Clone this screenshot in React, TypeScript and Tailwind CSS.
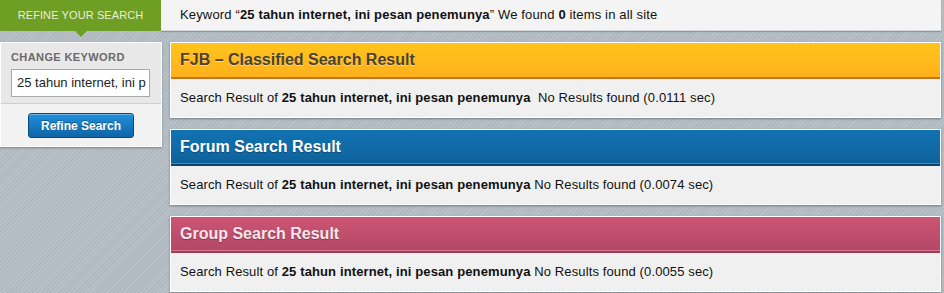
import React from "react";

const font = { fontFamily: '"Liberation Sans", Arial, sans-serif' };

function Panel({
  title,
  headerClass,
  titleClass,
  time,
  extraSpace,
}: {
  title: string;
  headerClass: string;
  titleClass: string;
  time: string;
  extraSpace?: boolean;
}) {
  return (
    <div className="border border-white shadow-[0_1px_2px_rgba(0,0,0,0.35)] bg-[#f0f0f0]">
      <div className={`h-[36px] flex items-center px-[9px] ${headerClass}`}>
        <span className={`text-[16px] font-bold ${titleClass}`}>{title}</span>
      </div>
      <div className="h-[38px] flex items-center px-[9px] text-[13px] tracking-[0.12px] text-[#111]">
        <span>
          Search Result of <b>25 tahun internet, ini pesan penemunya</b>
          {extraSpace ? "\u00a0 " : " "}No Results found ({time} sec)
        </span>
      </div>
    </div>
  );
}

export default function App() {
  return (
    <div
      style={font}
      className="w-[944px] h-[293px] overflow-hidden bg-[#b3bdc3] bg-[repeating-linear-gradient(135deg,#b9c3c9_0px,#b9c3c9_1px,#afb9bf_1px,#afb9bf_3px)]"
    >
      <div className="flex h-[31px]">
        <div className="relative w-[161px] bg-[#6f9e24] flex items-center justify-center">
          <span className="text-[11px] tracking-[0.1px] text-[#e6f0d6]">REFINE YOUR SEARCH</span>
          <div className="absolute left-[75px] top-[31px] w-0 h-0 border-l-[6px] border-r-[6px] border-t-[6px] border-l-transparent border-r-transparent border-t-[#6f9e24]" />
        </div>
        <div className="w-[780px] bg-[#f4f4f4] border-b border-[#d6dadc] shadow-[0_1px_1px_rgba(0,0,0,0.2)] flex items-center pl-[19px] text-[13px] tracking-[0.15px] text-[#111]">
          <span>
            Keyword “<b>25 tahun internet, ini pesan penemunya</b>” We found <b>0</b> items in all site
          </span>
        </div>
      </div>
      <div className="flex pt-[11px]">
        <div className="w-[162px] h-[105px] border border-white shadow-[0_1px_2px_rgba(0,0,0,0.3)] flex flex-col">
          <div className="h-[61px] bg-[#e8e8e8] border-b border-[#cfcfcf] px-[10px] pt-[8px]">
            <div className="text-[11px] font-bold tracking-[0.4px] text-[#6a6a6a] leading-[13px]">CHANGE KEYWORD</div>
            <div className="mt-[5px] h-[28px] w-[139px] border border-[#a9a9a9] bg-white flex items-center px-[5px] overflow-hidden whitespace-nowrap text-[13px] text-[#222]">
              25 tahun internet, ini p
            </div>
          </div>
          <div className="flex-1 bg-[#f2f2f2] flex justify-center pt-[9px]">
            <div className="w-[106px] h-[25px] rounded-[3px] border border-[#0b4a7c] bg-[linear-gradient(#2190dc,#0f64a6)] shadow-[inset_0_1px_0_rgba(255,255,255,0.35)] flex items-center justify-center text-[12px] font-bold text-white [text-shadow:0_-1px_0_rgba(0,0,0,0.3)]">
              Refine Search
            </div>
          </div>
        </div>
        <div className="ml-[8px] w-[771px] flex flex-col gap-[11px]">
          <Panel
            title="FJB – Classified Search Result"
            headerClass="bg-[linear-gradient(#ffc51c,#ffb01d)] border-b-2 border-[#c8761e]"
            titleClass="text-[#4b4130] [text-shadow:0_1px_0_rgba(255,255,255,0.45)]"
            time="0.0111"
            extraSpace
          />
          <Panel
            title="Forum Search Result"
            headerClass="bg-[linear-gradient(#1273b2,#0f629b)] border-b-2 border-[#0a4670] shadow-[inset_0_-1px_0_#3a8ac4]"
            titleClass="text-white [text-shadow:0_1px_1px_rgba(0,0,0,0.3)]"
            time="0.0074"
          />
          <Panel
            title="Group Search Result"
            headerClass="bg-[linear-gradient(#cd5473,#b34866)] border-b-2 border-[#a03b58] shadow-[inset_0_-1px_0_#d67890]"
            titleClass="text-[#f6e6eb] [text-shadow:0_1px_1px_rgba(0,0,0,0.3)]"
            time="0.0055"
          />
        </div>
      </div>
    </div>
  );
}
